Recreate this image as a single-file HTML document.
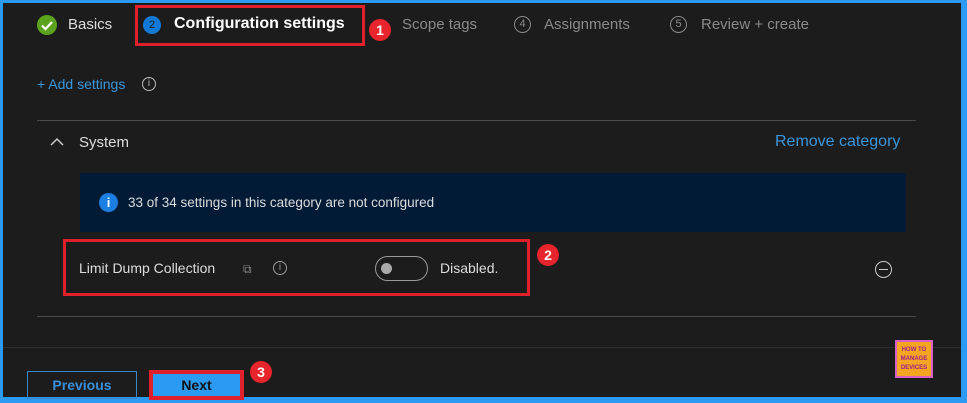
<!DOCTYPE html>
<html><head><style>
*{margin:0;padding:0;box-sizing:border-box}
body{width:967px;height:403px;background:#2b9af3;position:relative;overflow:hidden;font-family:"Liberation Sans",sans-serif}
.main{position:absolute;left:3px;top:3px;width:958px;height:394px;background:#1c1c1c}
.a{position:absolute}
.t{color:#ddd;font-size:15px}
.g{color:#8a8a8a;font-size:15px}
.circ{position:absolute;width:17px;height:17px;border-radius:50%;border:1px solid #8a8a8a;color:#8a8a8a;font-size:11px;text-align:center;line-height:15px}
.red{position:absolute;border:3px solid #e0202a}
.badge{position:absolute;width:22px;height:22px;border-radius:50%;background:#e8242c;color:#fff;font-size:14px;font-weight:bold;text-align:center;line-height:22px}
</style></head><body>
<div class="main"></div>
<div class="a" style="left:37px;top:15px;width:20px;height:20px;border-radius:50%;background:#5ca21e"></div>
<svg class="a" style="left:37px;top:15px" width="20" height="20"><path d="M5 10.5l3.5 3.5 6.5-7" stroke="#fff" stroke-width="2.2" fill="none"/></svg>
<div class="a t" style="left:68px;top:16px">Basics</div>
<div class="red" style="left:135px;top:5px;width:230px;height:41px"></div>
<div class="a" style="left:143px;top:16px;width:18px;height:18px;border-radius:50%;background:#1279d6;color:#1c1c1c;font-size:11px;text-align:center;line-height:18px">2</div>
<div class="a" style="left:174px;top:15px;color:#fff;font-size:16px;font-weight:bold">Configuration settings</div>
<div class="badge" style="left:369px;top:19px">1</div>
<div class="a g" style="left:402px;top:16px">Scope tags</div>
<div class="circ" style="left:514px;top:16px">4</div>
<div class="a g" style="left:544px;top:16px">Assignments</div>
<div class="circ" style="left:670px;top:16px">5</div>
<div class="a g" style="left:701px;top:16px">Review + create</div>
<div class="a" style="left:37px;top:76px;color:#3a96dd;font-size:14px">+ Add settings</div>
<div class="circ" style="left:142px;top:77px;width:14px;height:14px;line-height:12px;font-size:10px;color:#bbb;border-color:#bbb">i</div>
<div class="a" style="left:37px;top:120px;width:879px;height:1px;background:#4a4a4a"></div>
<svg class="a" style="left:49px;top:136px" width="16" height="12"><path d="M2 9l6-6 6 6" stroke="#ccc" stroke-width="1.5" fill="none"/></svg>
<div class="a t" style="left:79px;top:134px">System</div>
<div class="a" style="left:775px;top:133px;color:#3a96dd;font-size:16px">Remove category</div>
<div class="a" style="left:80px;top:173px;width:826px;height:59px;background:#011a36"></div>
<div class="a" style="left:99px;top:193px;width:19px;height:19px;border-radius:50%;background:#1a7fe0;color:#fff;font-size:13px;font-weight:bold;text-align:center;line-height:19px">i</div>
<div class="a" style="left:128px;top:195px;color:#ddd;font-size:13.5px">33 of 34 settings in this category are not configured</div>
<div class="red" style="left:63px;top:239px;width:467px;height:57px"></div>
<div class="badge" style="left:537px;top:244px">2</div>
<div class="a" style="left:79px;top:260px;color:#ddd;font-size:14px">Limit Dump Collection</div>
<div class="a" style="left:243px;top:262px;color:#888;font-size:12px">⧉</div>
<div class="circ" style="left:273px;top:261px;width:14px;height:14px;line-height:12px;font-size:10px;color:#999;border-color:#999">i</div>
<div class="a" style="left:375px;top:256px;width:53px;height:25px;border-radius:13px;border:1.5px solid #999"></div>
<div class="a" style="left:381px;top:263px;width:11px;height:11px;border-radius:50%;background:#aaa"></div>
<div class="a t" style="left:440px;top:260px;font-size:14px">Disabled.</div>
<div class="a" style="left:875px;top:261px;width:17px;height:17px;border-radius:50%;border:1px solid #ccc"></div>
<div class="a" style="left:879px;top:269px;width:9px;height:1px;background:#ccc"></div>
<div class="a" style="left:37px;top:316px;width:879px;height:1px;background:#4a4a4a"></div>
<div class="a" style="left:3px;top:347px;width:958px;height:1px;background:#2e2e2e"></div>
<div class="a" style="left:27px;top:371px;width:110px;height:28px;border:1px solid #3a86c8;color:#3a8fd8;font-size:14px;font-weight:bold;text-align:center;line-height:26px">Previous</div>
<div class="a" style="left:149px;top:370px;width:95px;height:30px;background:#e0202a"></div>
<div class="a" style="left:153px;top:374px;width:87px;height:22px;background:#2b9af3;color:#111;font-size:14px;font-weight:bold;text-align:center;line-height:22px">Next</div>
<div class="badge" style="left:250px;top:361px">3</div>
<div class="a" style="left:895px;top:340px;width:38px;height:38px;background:#d85ec8;padding:2px">
<div style="background:#f4a522;width:34px;height:34px;color:#a0208c;font-size:6px;font-weight:bold;text-align:center;line-height:9px;padding-top:4px">HOW TO<br>MANAGE<br>DEVICES</div></div>
</body></html>
